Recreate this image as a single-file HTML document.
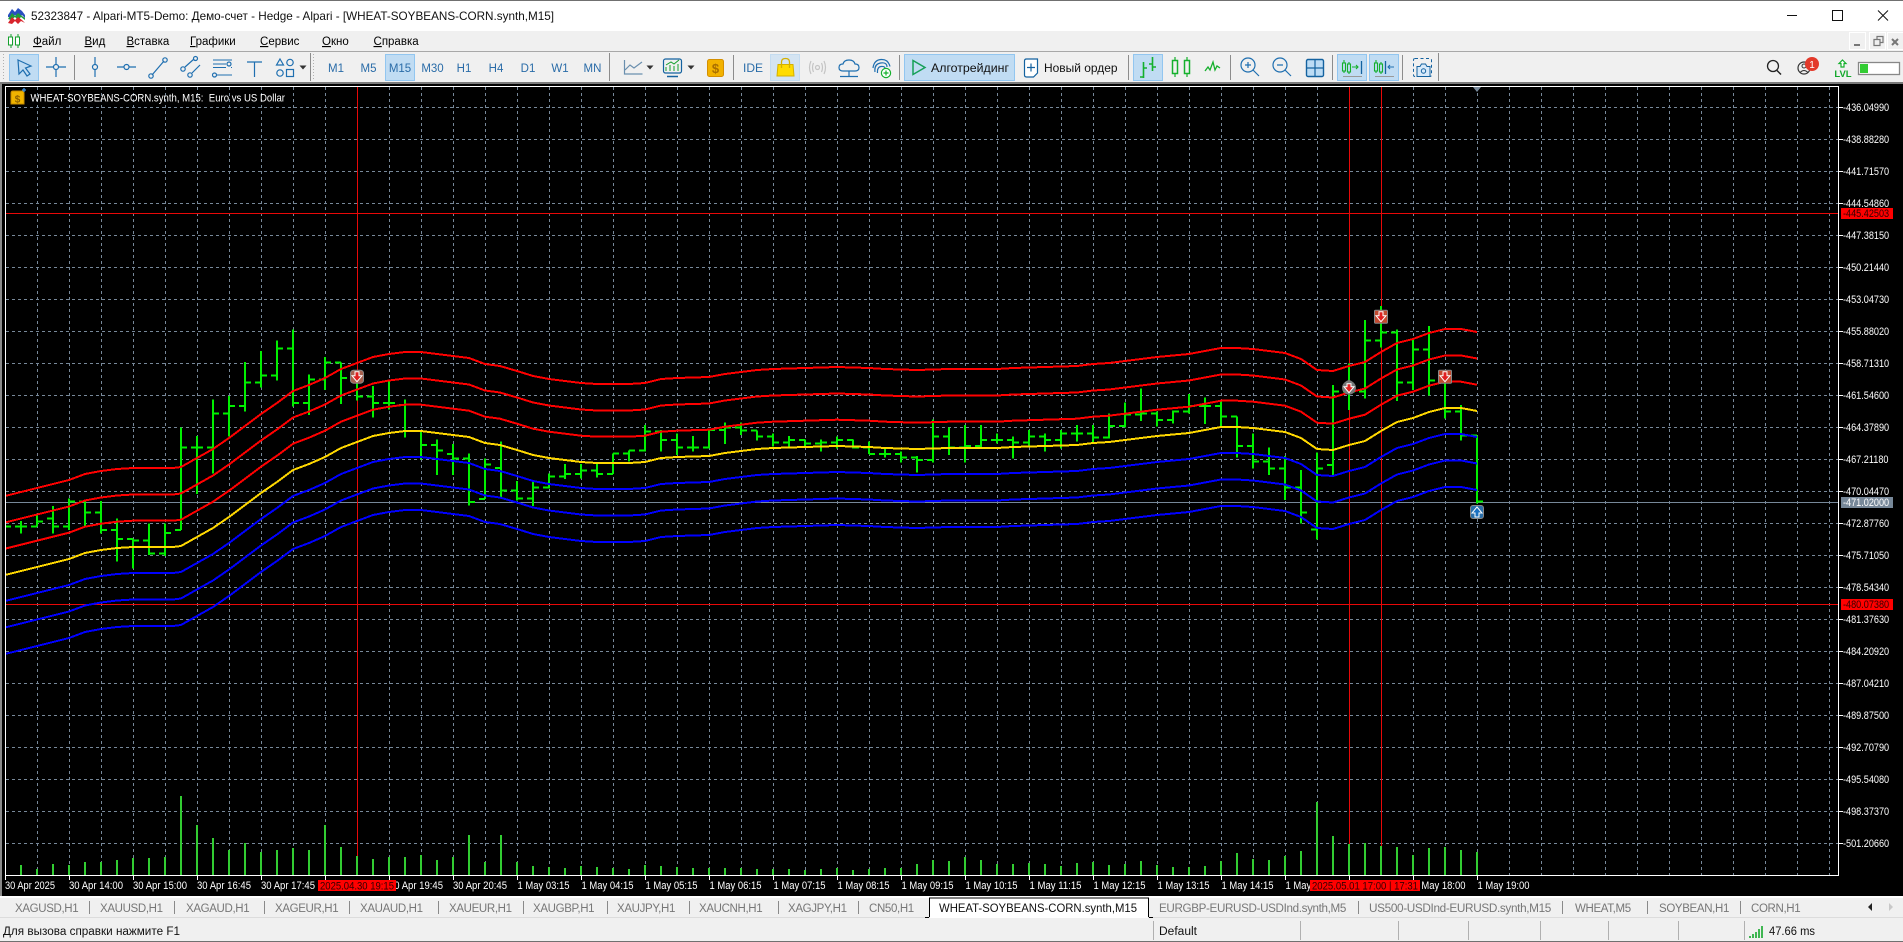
<!DOCTYPE html>
<html lang="ru"><head><meta charset="utf-8"><title>MT5</title>
<style>
html,body{margin:0;padding:0;width:1903px;height:942px;overflow:hidden;background:#f0f0f0}
svg{position:absolute;left:0;top:0;display:block}
text{font-family:"Liberation Sans","Noto Sans CJK SC",sans-serif;white-space:pre}
.i{fill:none;stroke:#1f6fb0;stroke-width:1.2}
.g{fill:none;stroke:#14b02c;stroke-width:1.5}
.m{font-size:11.5px;fill:#000}
.t{font-size:11.5px;fill:#777;letter-spacing:-.35px}
.b{font-size:11.5px;fill:#2a6ca8;text-anchor:middle}
.ax{font-size:11px;fill:#fff}
.ns{vector-effect:non-scaling-stroke}
</style></head><body>
<svg width="1903" height="942" viewBox="0 0 1903 942" xmlns="http://www.w3.org/2000/svg">
<!-- chrome -->
<rect width="1903" height="942" fill="#f0f0f0"/>
<rect width="1903" height="31" fill="#fff"/>
<rect width="1903" height="1" fill="#707070"/>
<rect y="51" width="1903" height="1" fill="#a8a8a8"/>
<!-- title -->
<g>
<path d="M8 15l4-6 3 3 3-4 4 3 3 4v3l-3-3-3 3-4-3-3 3-4-1z" fill="#2a4fc0"/>
<path d="M8 19l4-6 3 3 3-3 4 3 3 2v2l-4-3-3 3-3-3-4 3z" fill="#1f9c3a"/>
<path d="M8 23l4-6 3 3 3-3 4 3 3 3-4-2-3 3-3-3-3 3z" fill="#d8242c"/>
</g>
<text x="31" y="20" font-size="12" fill="#111" textLength="523" lengthAdjust="spacingAndGlyphs">52323847 - Alpari-MT5-Demo: Демо-счет - Hedge - Alpari - [WHEAT-SOYBEANS-CORN.synth,M15]</text>
<path d="M1787 15.5h10" stroke="#111" stroke-width="1"/>
<rect x="1832.5" y="10.5" width="10" height="10" fill="none" stroke="#111"/>
<path d="M1878 10.5l10 10M1888 10.5l-10 10" stroke="#111" stroke-width="1"/>
<!-- menu -->
<path d="M11 34v14M18 34v14" stroke="#14a02c" stroke-width="1"/><rect x="8.5" y="37" width="4" height="8" fill="#fff" stroke="#14a02c"/><rect x="15.5" y="37" width="4" height="8" fill="#fff" stroke="#14a02c"/>
<text class="m" x="33" y="45"><tspan text-decoration="underline">Ф</tspan>айл</text>
<text class="m" x="84.5" y="45"><tspan text-decoration="underline">В</tspan>ид</text>
<text class="m" x="126.5" y="45"><tspan text-decoration="underline">В</tspan>ставка</text>
<text class="m" x="190" y="45"><tspan text-decoration="underline">Г</tspan>рафики</text>
<text class="m" x="260" y="45"><tspan text-decoration="underline">С</tspan>ервис</text>
<text class="m" x="322" y="45"><tspan text-decoration="underline">О</tspan>кно</text>
<text class="m" x="373.5" y="45"><tspan text-decoration="underline">С</tspan>правка</text>
<!-- mdi buttons -->
<g fill="#f0f0f0" stroke="#fff"><rect x="1849.5" y="32.5" width="16" height="17"/><rect x="1869.5" y="32.5" width="16" height="17"/><rect x="1887.5" y="32.5" width="16" height="17"/></g>
<path d="M1854 45h6" stroke="#777" stroke-width="2"/>
<path d="M1874 39.5h6v6h-6zM1877 39.5v-3h6v6h-3" fill="none" stroke="#777" stroke-width="1.2"/>
<path d="M1892 39l6 6M1898 39l-6 6" stroke="#777" stroke-width="2"/>
<!-- toolbar buttons -->
<g fill="#c0dcf3" stroke="#92c6f0">
<rect x="9.5" y="54.5" width="29" height="26"/><rect x="385.5" y="54.5" width="29" height="26"/><rect x="770.5" y="54.5" width="29" height="26" fill="#d4e4f2" stroke="#c4dcf0"/><rect x="904.5" y="54.5" width="110" height="26"/><rect x="1133.5" y="54.5" width="29" height="26"/><rect x="1337.5" y="54.5" width="29" height="26"/><rect x="1369.5" y="54.5" width="29" height="26"/>
</g>
<path d="M3.5 54v27M313.5 54v27" stroke="#b0b0b0" stroke-dasharray="1 2"/>
<path d="M74.5 55v25M310.5 53v28M609.5 53v28M733.5 55v25M899.5 55v25M1128.5 55v25M1230.5 55v25M1332.5 55v25M1402.5 55v25M1438.5 53v28" stroke="#8c8c8c"/>
<path d="M18 60l13 6-5.500 2 4.500 6-3 2-4-6-4 4z" class="i"/>
<path d="M46 67h20M56 57v20" class="i"/><circle cx="56" cy="67" r="2.500" class="i" style="fill:#f0f0f0"/>
<path d="M95 57v20" class="i"/><circle cx="95" cy="67" r="2.500" class="i" style="fill:#f0f0f0"/>
<path d="M117 67h19" class="i"/><circle cx="126.500" cy="67" r="2.500" class="i" style="fill:#f0f0f0"/>
<path d="M152 75l12-14" class="i"/><circle cx="151" cy="76" r="2.200" class="i"/><circle cx="165" cy="60" r="2.200" class="i"/>
<path d="M185 67l9-8M192 73l8-8" class="i"/><circle cx="183" cy="69" r="2.200" class="i"/><circle cx="195.500" cy="58.500" r="2" class="i"/><circle cx="190" cy="75" r="2.200" class="i"/>
<path d="M213 60h19M213 67.500h13M231 67.500h1M217 75h15M213 64h13" class="i" style="stroke-width:1.100"/><circle cx="229" cy="64" r="2" class="i"/><circle cx="214.500" cy="75" r="2" class="i"/>
<path d="M247 62h15M254.500 62v15" class="i"/>
<path d="M280 59l3.500 6h-7z" class="i"/><circle cx="290" cy="62.500" r="3.200" class="i"/><circle cx="280" cy="73" r="3.200" class="i"/><rect x="286.500" y="69.500" width="7" height="7" class="i"/>
<path d="M299.500 65.500h7l-3.500 4z M646.500 65.500h7l-3.500 4z M687.500 65.500h7l-3.500 4z" fill="#333"/>
<text class="b" x="336" y="72">M1</text><text class="b" x="368.500" y="72">M5</text><text class="b" x="400" y="72">M15</text><text class="b" x="432.500" y="72">M30</text><text class="b" x="464" y="72">H1</text><text class="b" x="496" y="72">H4</text><text class="b" x="528" y="72">D1</text><text class="b" x="560" y="72">W1</text><text class="b" x="592.500" y="72">MN</text>
<path d="M624.500 60v14h18M625 70l5-5 4 3 8-6" fill="none" stroke="#6a8fae" stroke-width="1.200"/>
<rect x="663.500" y="59" width="18" height="14" rx="2" class="i" style="stroke:#14629f"/><path d="M666 71v-4M670 71v-6M674 71v-5M678 71v-7M666 65l5-3 3 2 5-4" fill="none" stroke="#14a02c"/><path d="M667 76.500h11" stroke="#14629f" stroke-width="1.500"/>
<rect x="707.500" y="59.500" width="16" height="17" rx="2" fill="#f2b200" stroke="#d48f00"/><text x="715.500" y="73" font-size="13" font-weight="bold" text-anchor="middle" fill="#a86e00">$</text>
<text x="753" y="72" font-size="12" fill="#2a6ca8" text-anchor="middle">IDE</text>
<path d="M778 64.500h15l1 11.500h-17z" fill="#ffdc00" stroke="#d4b000"/><path d="M781.500 68v-6q0-3.500 4-3.500t4 3.500v6" fill="none" stroke="#d4b000" stroke-width="1.300"/>
<g fill="none" stroke="#c4c4c4" stroke-width="1.200"><circle cx="817.500" cy="67.500" r="2"/><path d="M813.500 63q-2 4.500 0 9M821.500 63q2 4.500 0 9M811 61q-3 6.500 0 13M824 61q3 6.500 0 13"/></g>
<path d="M843 71q-4 0-4-3.500t4-3.500q1-4 6-4t6 4q4 0 4 3.500t-4 3.500zM849 71v5M840 76.500h18" class="i"/>
<g class="i"><path d="M875 72q-1-8 5.500-9t6.500 4M877.500 73q-.5-6 3.500-6.500t4 2M873 68q1-8 8-8.500t9 7"/></g>
<circle cx="886" cy="73" r="4.600" fill="#fff" stroke="#14b02c" stroke-width="1.200"/><path d="M883.500 73h5M886 70.500v5" stroke="#14b02c" stroke-width="1.200"/>
<path d="M913 60.500l12 7-12 7z" fill="none" stroke="#16a058" stroke-width="1.500"/>
<text x="931" y="72" font-size="12" fill="#111" textLength="78" lengthAdjust="spacingAndGlyphs">Алготрейдинг</text>
<path d="M1024.500 61q0-2 2-2h11v14l-4 4h-7q-2 0-2-2z" class="i" style="stroke:#14629f;fill:#fff"/><path d="M1027 67.500h8M1031 63.500v8" class="i" style="stroke:#14629f"/>
<text x="1044" y="72" font-size="12" fill="#111" textLength="73.500" lengthAdjust="spacingAndGlyphs">Новый ордер</text>
<path d="M1143.500 62v16M1140 77h3.500M1143.500 68h3.500M1152.500 57v14M1149 64h3.500M1152.500 67h3.500" class="g" style="stroke-width:1.600"/>
<path d="M1175 57v20M1187 57v20" class="g" style="stroke-width:1.200"/><rect x="1172.500" y="60.500" width="5" height="13" class="g" style="fill:#f0f0f0"/><rect x="1184.500" y="60.500" width="5" height="13" class="g" style="fill:#f0f0f0"/>
<path d="M1205 71l3-4 2 3 3-8 2 8 2-4 3 2" class="g" style="stroke-width:1.300"/>
<circle cx="1248" cy="65" r="7" class="i"/><path d="M1253 70l6 6M1245 65h6M1248 62v6" class="i"/>
<circle cx="1280" cy="65" r="7" class="i"/><path d="M1285 70l6 6M1277 65h6" class="i"/>
<rect x="1306.500" y="59.500" width="17" height="17" rx="1.500" fill="#bcdcf5" stroke="#14629f" stroke-width="1.400"/><path d="M1315 59.500v17M1306.500 68h17" stroke="#14629f" stroke-width="1.200"/>
<g class="g" style="stroke-width:1.100"><path d="M1344 60v13M1349 62v12"/><rect x="1342.500" y="63" width="3" height="8" style="fill:#c0dcf3"/><rect x="1347.500" y="64" width="3" height="8" style="fill:#c0dcf3"/><path d="M1352 67h6M1356 65l2 2-2 2"/></g><path d="M1361.500 61v13" stroke="#14629f" stroke-width="1.300"/><path d="M1343 76.500h19" stroke="#9a9a9a"/>
<g class="g" style="stroke-width:1.100"><path d="M1376 60v13M1381 62v12"/><rect x="1374.500" y="63" width="3" height="8" style="fill:#c0dcf3"/><rect x="1379.500" y="64" width="3" height="8" style="fill:#c0dcf3"/></g><path d="M1385.500 61v13" stroke="#14629f" stroke-width="1.300"/><path d="M1394 67h-6M1390 65l-2 2 2 2" class="i" style="stroke-width:1.100"/><path d="M1375 76.500h19" stroke="#9a9a9a"/>
<rect x="1413.500" y="58.500" width="18" height="18" rx="1.500" fill="none" stroke="#14629f" stroke-dasharray="3 2.500"/><path d="M1417 66.500h3l1.500-2.500h4l1.500 2.500h3v10h-13z" fill="#d8eafa" stroke="#14629f"/><circle cx="1423.500" cy="71" r="2.200" fill="none" stroke="#14629f"/>
<circle cx="1773" cy="66" r="5.500" fill="none" stroke="#222" stroke-width="1.300"/><path d="M1777 70.500l4 4" stroke="#222" stroke-width="1.500"/>
<circle cx="1804" cy="68" r="6" fill="none" stroke="#333" stroke-width="1.200"/><circle cx="1804" cy="66" r="2" fill="none" stroke="#333"/><path d="M1800 72.500q4-4 8 0" fill="none" stroke="#333"/>
<circle cx="1812" cy="64" r="7" fill="#e3392a"/><text x="1812" y="68" font-size="10" fill="#fff" text-anchor="middle">1</text>
<path d="M1842.500 60l3.500 3.500h-2v3.500h-3v-3.500h-2z" fill="#fff" stroke="#14b02c" stroke-width="1.200"/><text x="1843" y="77" font-size="9.500" font-weight="bold" fill="#14a82c" text-anchor="middle">LVL</text>
<rect x="1858.500" y="62.500" width="41" height="12" fill="#fff" stroke="#888" stroke-width="1.300"/><rect x="1860" y="64" width="8" height="9" fill="#33cc33"/>
<rect y="82" width="1903" height="2" fill="#7a7a7a"/>
<!-- chart area -->
<rect x="0" y="84" width="1903" height="812" fill="#000"/>
<rect x="0" y="84" width="2" height="812" fill="#8a8a8a"/>
<g shape-rendering="crispEdges">
<g fill="none" stroke="#778899" stroke-dasharray="3 3">
<path d="M37.500 87V875M69.500 87V875M101.500 87V875M133.500 87V875M165.500 87V875M197.500 87V875M229.500 87V875M261.500 87V875M293.500 87V875M325.500 87V875M357.500 87V875M389.500 87V875M421.500 87V875M453.500 87V875M485.500 87V875M517.500 87V875M549.500 87V875M581.500 87V875M613.500 87V875M645.500 87V875M677.500 87V875M709.500 87V875M741.500 87V875M773.500 87V875M805.500 87V875M837.500 87V875M869.500 87V875M901.500 87V875M933.500 87V875M965.500 87V875M997.500 87V875M1029.500 87V875M1061.500 87V875M1093.500 87V875M1125.500 87V875M1157.500 87V875M1189.500 87V875M1221.500 87V875M1253.500 87V875M1285.500 87V875M1317.500 87V875M1349.500 87V875M1381.500 87V875M1413.500 87V875M1445.500 87V875M1477.500 87V875M1509.500 87V875M1541.500 87V875M1573.500 87V875M1605.500 87V875M1637.500 87V875M1669.500 87V875M1701.500 87V875M1733.500 87V875M1765.500 87V875M1797.500 87V875M1829.500 87V875"/>
<path d="M6 107.500H1838M6 139.500H1838M6 171.500H1838M6 203.500H1838M6 235.500H1838M6 267.500H1838M6 299.500H1838M6 331.500H1838M6 363.500H1838M6 395.500H1838M6 427.500H1838M6 459.500H1838M6 491.500H1838M6 523.500H1838M6 555.500H1838M6 587.500H1838M6 619.500H1838M6 651.500H1838M6 683.500H1838M6 715.500H1838M6 747.500H1838M6 779.500H1838M6 811.500H1838M6 843.500H1838"/>
</g>
<path d="M6 502.500H1838" stroke="#778899"/>
<path d="M6 213.500H1838M6 604.500H1838M357.500 87V875M1349.500 87V875M1381.500 87V875" stroke="#e80808"/>
<!-- volumes -->
<g transform="translate(0 780) scale(1 .33333)"><path class="ns" fill="none" stroke="#32cd32" stroke-width="2" d="M21 285V255M37 285V267M53 285V252M69 285V255M85 285V246M101 285V246M117 285V240M133 285V234M149 285V234M165 285V231M181 285V48M197 285V135M213 285V174M229 285V210M245 285V189M261 285V216M277 285V210M293 285V204M309 285V210M325 285V135M341 285V201M357 285V228M373 285V237M389 285V231M405 285V231M421 285V225M437 285V240M453 285V231M469 285V165M485 285V246M501 285V165M517 285V246M533 285V258M549 285V261M565 285V264M581 285V258M597 285V261M613 285V264M629 285V267M645 285V255M661 285V258M677 285V261M693 285V264M709 285V264M725 285V264M741 285V264M757 285V267M773 285V267M789 285V267M805 285V270M821 285V267M837 285V264M853 285V270M869 285V267M885 285V264M901 285V264M917 285V252M933 285V240M949 285V243M965 285V231M981 285V240M997 285V252M1013 285V252M1029 285V249M1045 285V252M1061 285V258M1077 285V249M1093 285V246M1109 285V255M1125 285V252M1141 285V243M1157 285V255M1173 285V261M1189 285V261M1205 285V258M1221 285V243M1237 285V219M1253 285V237M1269 285V240M1285 285V228M1301 285V213M1317 285V66M1333 285V168M1349 285V192M1365 285V189M1381 285V198M1397 285V201M1413 285V225M1429 285V204M1445 285V201M1461 285V210M1477 285V216"/></g>
<!-- bars -->
<g fill="none" stroke="#00f000" stroke-width="2">
<g transform="translate(0 300) scale(1 .33333)"><path class="ns" d="M6 680h5M21 663V700M15 680h6M21 680h6M37 645V680M31 680h6M37 664h6M53 618V700M47 656h6M53 680h6M69 595V690M63 680h6M69 605h6M85 605V678M79 605h6M85 638h6M101 603V700M95 638h6M101 690h6M117 655V785M111 690h6M117 717h6M133 717V805M127 717h6M133 722h6M149 670V765M143 722h6M149 760h6M165 670V768M159 760h6M165 699h6M181 382V690M175 690h6M181 443h6M197 408V582M191 443h6M197 443h6M213 298V520M207 443h6M213 341h6M229 288V410M223 341h6M229 318h6M245 186V335M239 318h6M245 247h6M261 153V262M255 247h6M261 226h6M277 121V242M271 226h6M277 146h6M293 88V320M287 146h6M293 309h6M309 223V345M303 309h6M309 238h6M325 171V270M319 238h6M325 187h6M341 187V312M335 187h6M341 234h6M357 240V302M351 234h6M357 290h6M373 258V353M367 290h6M373 309h6M389 238V328M383 309h6M389 309h6M405 298V413M399 315h6M405 393h6M421 393V478M415 393h6M421 435h6M437 418V525M431 435h6M437 452h6M453 432V525M447 462h6M453 476h6M469 460V617M463 476h6M469 606h6M485 475V597M479 597h6M485 494h6"/></g>
<g transform="translate(0 380) scale(1 .33333)"><path class="ns" d="M501 185V355M495 264h6M501 331h6M517 303V362M511 331h6M517 356h6M533 303V378M527 356h6M533 323h6M549 280V325M543 323h6M549 290h6M565 252V297M559 290h6M565 282h6M581 252V295M575 282h6M581 272h6M597 248V292M591 272h6M597 282h6M613 220V282M607 282h6M613 220h6M629 212V245M623 220h6M629 212h6M645 135V215M639 212h6M645 155h6M661 150V215M655 155h6M661 180h6M677 160V225M671 180h6M677 203h6M693 168V215M687 203h6M693 203h6M709 148V205M703 203h6M709 150h6M725 128V192M719 150h6M725 143h6M741 127V165M735 143h6M741 152h6M757 152V182M751 152h6M757 170h6M773 160V200M767 170h6M773 188h6M789 168V200M783 188h6M789 180h6M805 178V200M799 180h6M805 190h6M821 178V215M815 190h6M821 188h6M837 170V205M831 188h6M837 180h6M853 178V205M847 180h6M853 203h6M869 185V222M863 203h6M869 222h6M885 205V233M879 222h6M885 222h6M901 215V248M895 222h6M901 232h6M917 228V278M911 232h6M917 240h6M933 118V248M927 240h6M933 170h6M949 143V225M943 170h6M949 203h6M965 135V248M959 203h6M965 198h6M981 135V203M975 198h6M981 180h6M997 160V190M991 180h6M997 180h6M1013 170V235M1007 180h6M1013 188h6M1029 150V200M1023 188h6M1029 170h6M1045 160V215M1039 170h6M1045 180h6M1061 150V205M1055 180h6M1061 160h6M1077 135V185M1071 160h6M1077 160h6M1093 135V188M1087 160h6M1093 172h6M1109 100V175M1103 172h6M1109 138h6M1125 67V143M1119 138h6M1125 103h6M1141 25V123M1135 103h6M1141 100h6M1157 95V140M1151 100h6M1157 120h6M1173 92V130M1167 120h6M1173 95h6M1189 42V100M1183 95h6M1189 78h6M1205 52V132M1199 78h6M1205 78h6M1221 65V140M1215 78h6M1221 110h6M1237 110V233M1231 110h6M1237 198h6M1253 160V265M1247 198h6M1253 245h6"/></g>
<g transform="translate(0 290) scale(1 .33333)"><path class="ns" d="M1269 472V555M1263 515h6M1269 535h6M1285 498V630M1279 535h6M1285 592h6M1301 540V700M1295 592h6M1301 667h6M1317 488V748M1311 718h6M1317 535h6M1333 285V557M1327 525h6M1333 305h6M1349 220V360M1343 305h6M1349 305h6M1365 90V325M1359 305h6M1365 152h6M1381 48V172M1375 152h6M1381 128h6M1397 118V333M1391 128h6M1397 278h6M1413 150V300M1407 278h6M1413 178h6M1429 108V317M1423 178h6M1429 272h6M1445 270V385M1439 272h6M1445 365h6M1461 345V452M1455 365h6M1461 437h6M1477 437V640M1471 437h6M1477 635h6"/></g>
</g>
<!-- indicator -->
<defs><polyline id="bd" fill="none" stroke-width="2" points="5,575 33,568 69,559 85,553 101,550 117,548 133,547 173,547 181,546 213,528 229,517 245,505 261,493 277,482 293,470 309,464 325,457 341,448 357,442 373,436 389,433 405,431 421,431 437,433 453,435 469,437 485,443 500,445 517,450 533,455 549,458 565,460 581,462 597,463 629,463 645,462 661,458 677,457 709,456 725,453 741,451 757,449 773,448 805,447 837,446 869,447 885,448 917,449 949,448 997,448 1013,447 1045,446 1077,445 1093,443 1109,442 1125,440 1157,436 1189,433 1221,427 1237,427 1253,428 1285,432 1301,438 1317,449 1333,450 1349,445 1365,441 1381,431 1397,422 1413,418 1429,412 1445,408 1461,408 1477,411"/></defs>
<use href="#bd" y="-79" stroke="#ff0000"/><use href="#bd" y="-52.500" stroke="#ff0000"/><use href="#bd" y="-26.300" stroke="#ff0000"/>
<use href="#bd" stroke="#ffd700"/>
<use href="#bd" y="26" stroke="#0000ff"/><use href="#bd" y="52.500" stroke="#0000ff"/><use href="#bd" y="79" stroke="#0000ff"/>
<!-- frame -->
<path d="M5.500 86.500H1838.500V875.500H5.500Z" fill="none" stroke="#fff"/>
<path d="M1839 107.500h4M1839 139.500h4M1839 171.500h4M1839 203.500h4M1839 235.500h4M1839 267.500h4M1839 299.500h4M1839 331.500h4M1839 363.500h4M1839 395.500h4M1839 427.500h4M1839 459.500h4M1839 491.500h4M1839 523.500h4M1839 555.500h4M1839 587.500h4M1839 619.500h4M1839 651.500h4M1839 683.500h4M1839 715.500h4M1839 747.500h4M1839 779.500h4M1839 811.500h4M1839 843.500h4" stroke="#fff"/>
<path d="M5.500 876v4M69.500 876v4M133.500 876v4M197.500 876v4M261.500 876v4M325.500 876v4M389.500 876v4M453.500 876v4M517.500 876v4M581.500 876v4M645.500 876v4M709.500 876v4M773.500 876v4M837.500 876v4M901.500 876v4M965.500 876v4M1029.500 876v4M1093.500 876v4M1157.500 876v4M1221.500 876v4M1285.500 876v4M1349.500 876v4M1413.500 876v4M1477.500 876v4" stroke="#fff"/>
</g>
<path d="M1473 87h8l-4 5z" fill="#778899"/>
<!-- markers -->
<g>
<g transform="translate(357 376.700)"><rect x="-6.500" y="-6.500" width="13" height="13" rx="3" fill="#a8604e" stroke="#888"/><path d="M-2 -5h4v4h3l-5 6-5-6h3z" fill="#e02020" stroke="#fff"/></g>
<g transform="translate(1349 387.700)"><path d="M0 -8q7 3 7 8a7 7 0 0 1-14 0q0-5 7-8z" fill="#777"/><path d="M-2 -4h4v3h3l-5 6-5-6h3z" fill="#e02020" stroke="#fff"/></g>
<g transform="translate(1381 316.700)"><rect x="-6.500" y="-6.500" width="13" height="13" rx="1" fill="#c2492f" stroke="#888"/><path d="M-2 -5h4v4h3l-5 6-5-6h3z" fill="#e02020" stroke="#fff"/></g>
<g transform="translate(1445 376.700)"><rect x="-6.500" y="-6.500" width="13" height="13" rx="1" fill="#c2492f" stroke="#888"/><path d="M-2 -5h4v4h3l-5 6-5-6h3z" fill="#e02020" stroke="#fff"/></g>
<g transform="translate(1477 512)"><rect x="-6.500" y="-6.500" width="13" height="13" rx="2.500" fill="#2a6ea8" stroke="#888"/><path d="M0 -5l5 6h-3v4h-4v-4h-3z" fill="#1a70c0" stroke="#fff"/></g>
</g>
<!-- chart title -->
<path d="M11 93q0-2 2-2h9q2 0 2 2v11h-13z" fill="#f0b400" stroke="#c88c00"/><text x="17.500" y="102.500" font-size="10" font-weight="bold" text-anchor="middle" fill="#8c6000">$</text><path d="M22 90h4M24 88v4" stroke="#3a8fe0" stroke-width="1.300"/>
<text class="ax" x="30.500" y="101.500" textLength="254.500" lengthAdjust="spacingAndGlyphs">WHEAT-SOYBEANS-CORN.synth, M15:  Euro vs US Dollar</text>
<!-- price axis -->
<g class="ax" transform="translate(1843 0) scale(.83 1)">
<text x="0" y="111">-436.04990</text><text x="0" y="143">-438.88280</text><text x="0" y="175">-441.71570</text><text x="0" y="207">-444.54860</text><text x="0" y="239">-447.38150</text><text x="0" y="271">-450.21440</text><text x="0" y="303">-453.04730</text><text x="0" y="335">-455.88020</text><text x="0" y="367">-458.71310</text><text x="0" y="399">-461.54600</text><text x="0" y="431">-464.37890</text><text x="0" y="463">-467.21180</text><text x="0" y="495">-470.04470</text><text x="0" y="527">-472.87760</text><text x="0" y="559">-475.71050</text><text x="0" y="591">-478.54340</text><text x="0" y="623">-481.37630</text><text x="0" y="655">-484.20920</text><text x="0" y="687">-487.04210</text><text x="0" y="719">-489.87500</text><text x="0" y="751">-492.70790</text><text x="0" y="783">-495.54080</text><text x="0" y="815">-498.37370</text><text x="0" y="847">-501.20660</text>
</g>
<rect x="1841" y="208" width="52" height="11" fill="#f00"/><rect x="1841" y="599" width="52" height="11" fill="#f00"/><rect x="1841" y="497" width="52" height="11" fill="#778899"/>
<g class="ax" transform="translate(1843 0) scale(.83 1)"><text x="0" y="217" style="fill:#300">-445.42503</text><text x="0" y="608" style="fill:#300">-480.07380</text><text x="0" y="506">-471.02000</text></g>
<!-- time axis -->
<g class="ax">
<text x="5" y="889" textLength="50" lengthAdjust="spacingAndGlyphs">30 Apr 2025</text>
<text x="69" y="889" textLength="54" lengthAdjust="spacingAndGlyphs">30 Apr 14:00</text>
<text x="133" y="889" textLength="54" lengthAdjust="spacingAndGlyphs">30 Apr 15:00</text>
<text x="197" y="889" textLength="54" lengthAdjust="spacingAndGlyphs">30 Apr 16:45</text>
<text x="261" y="889" textLength="54" lengthAdjust="spacingAndGlyphs">30 Apr 17:45</text>
<text x="389" y="889" textLength="54" lengthAdjust="spacingAndGlyphs">30 Apr 19:45</text>
<text x="453" y="889" textLength="54" lengthAdjust="spacingAndGlyphs">30 Apr 20:45</text>
<text x="517.500" y="889" textLength="52" lengthAdjust="spacingAndGlyphs">1 May 03:15</text>
<text x="581.500" y="889" textLength="52" lengthAdjust="spacingAndGlyphs">1 May 04:15</text>
<text x="645.500" y="889" textLength="52" lengthAdjust="spacingAndGlyphs">1 May 05:15</text>
<text x="709.500" y="889" textLength="52" lengthAdjust="spacingAndGlyphs">1 May 06:15</text>
<text x="773.500" y="889" textLength="52" lengthAdjust="spacingAndGlyphs">1 May 07:15</text>
<text x="837.500" y="889" textLength="52" lengthAdjust="spacingAndGlyphs">1 May 08:15</text>
<text x="901.500" y="889" textLength="52" lengthAdjust="spacingAndGlyphs">1 May 09:15</text>
<text x="965.500" y="889" textLength="52" lengthAdjust="spacingAndGlyphs">1 May 10:15</text>
<text x="1029.500" y="889" textLength="52" lengthAdjust="spacingAndGlyphs">1 May 11:15</text>
<text x="1093.500" y="889" textLength="52" lengthAdjust="spacingAndGlyphs">1 May 12:15</text>
<text x="1157.500" y="889" textLength="52" lengthAdjust="spacingAndGlyphs">1 May 13:15</text>
<text x="1221.500" y="889" textLength="52" lengthAdjust="spacingAndGlyphs">1 May 14:15</text>
<text x="1285.500" y="889" textLength="52" lengthAdjust="spacingAndGlyphs">1 May 16:00</text>
<text x="1413.500" y="889" textLength="52" lengthAdjust="spacingAndGlyphs">1 May 18:00</text>
<text x="1477.500" y="889" textLength="52" lengthAdjust="spacingAndGlyphs">1 May 19:00</text>
</g>
<rect x="318" y="880" width="78" height="11" fill="#f00"/><text class="ax" x="320" y="889.500" textLength="74" lengthAdjust="spacingAndGlyphs" style="fill:#300">2025.04.30 19:15</text>
<rect x="1310" y="880" width="110" height="11" fill="#f00"/><text class="ax" x="1312" y="889.500" textLength="106" lengthAdjust="spacingAndGlyphs" style="fill:#300">2025.05.01 17:00 | 17:31</text>
<!-- tabs -->
<rect y="896" width="1903" height="2" fill="#fff"/>
<rect y="898" width="1903" height="20" fill="#f0f0f0"/>
<rect y="917" width="1903" height="1" fill="#dcdcdc"/>
<path d="M89.500 901v13M174.500 901v13M264.500 901v13M349.500 901v13M438.500 901v13M523.500 901v13M607.500 901v13M689.500 901v13M778.500 901v13M858.500 901v13M1358.500 901v13M1562.500 901v13M1647.500 901v13M1740.500 901v13" stroke="#8a8a8a"/>
<g class="t">
<text x="15" y="912">XAGUSD,H1</text><text x="100" y="912">XAUUSD,H1</text><text x="186" y="912">XAGAUD,H1</text><text x="275" y="912">XAGEUR,H1</text><text x="360" y="912">XAUAUD,H1</text><text x="449" y="912">XAUEUR,H1</text><text x="533" y="912">XAUGBP,H1</text><text x="617" y="912">XAUJPY,H1</text><text x="699" y="912">XAUCNH,H1</text><text x="788" y="912">XAGJPY,H1</text><text x="869" y="912">CN50,H1</text>
<text x="1159" y="912" textLength="187" lengthAdjust="spacingAndGlyphs">EURGBP-EURUSD-USDInd.synth,M5</text>
<text x="1369" y="912" textLength="182" lengthAdjust="spacingAndGlyphs">US500-USDInd-EURUSD.synth,M15</text>
<text x="1575" y="912">WHEAT,M5</text><text x="1659" y="912">SOYBEAN,H1</text><text x="1751" y="912">CORN,H1</text>
</g>
<path d="M929.500 917V898H1148.500V917" fill="#fff" stroke="#000"/>
<rect x="930" y="917" width="218" height="1" fill="#fff"/>
<path d="M925 917.500h4M1149 917.500h4" stroke="#000"/>
<text x="939" y="912" font-size="12" fill="#111" textLength="198" lengthAdjust="spacingAndGlyphs">WHEAT-SOYBEANS-CORN.synth,M15</text>
<path d="M1872 903v8l-4-4z" fill="#222"/><path d="M1889 903v8l4-4z" fill="#c8c8c8"/>
<!-- status -->
<text x="3" y="935" font-size="11.500" fill="#111" textLength="177" lengthAdjust="spacingAndGlyphs">Для вызова справки нажмите F1</text>
<text x="1159" y="935" font-size="11.500" fill="#111" textLength="38" lengthAdjust="spacingAndGlyphs">Default</text>
<path d="M1153.500 921v19M1300.500 921v19M1398.500 921v19M1468.500 921v19M1540.500 921v19M1608.500 921v19M1678.500 921v19M1744.500 921v19" stroke="#b0b0b0"/>
<path d="M1750 938v-2M1753 938v-4M1756 938v-6M1759 938v-9M1762 938v-12" stroke="#14a82c" stroke-width="1.600"/>
<text x="1769" y="935" font-size="11.500" fill="#111" textLength="46" lengthAdjust="spacingAndGlyphs">47.66 ms</text>
<rect y="941" width="1903" height="1" fill="#707070"/>
</svg>
</body></html>
